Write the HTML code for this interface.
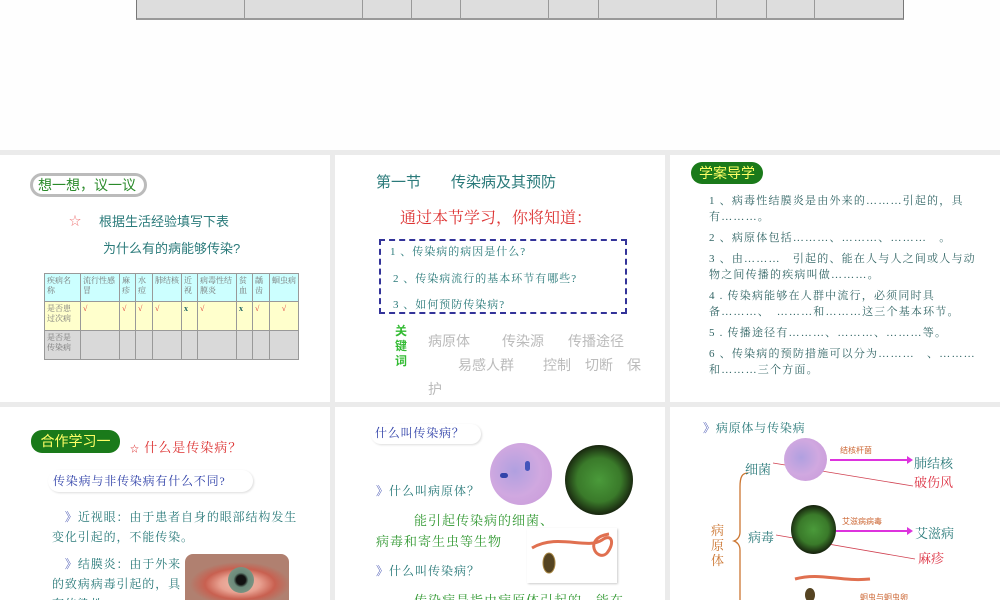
<!DOCTYPE html>
<html><head><meta charset="utf-8"><style>
*{margin:0;padding:0;box-sizing:border-box}
body{width:1000px;height:600px;overflow:hidden;background:#ebebeb;position:relative;font-family:"Liberation Sans","Noto Sans CJK SC",sans-serif}
.s{position:absolute;background:#fff;overflow:hidden}
.a{position:absolute;white-space:nowrap}
.sf{font-family:"Liberation Serif","Noto Serif CJK SC",serif}
table{border-collapse:collapse;table-layout:fixed}
td{border:1px solid #999;font-family:"Liberation Serif","Noto Serif CJK SC",serif;font-size:8px;line-height:10px;color:#777;vertical-align:top;padding:2px 2px;overflow:hidden;word-break:break-all;white-space:normal}
</style></head><body>
<!-- top slide -->
<div class="s" style="left:0;top:0;width:1000px;height:150px;background:#fefefe">
  <div class="a" style="left:136px;top:0;width:768px;height:20px;background:#ddd;border:1px solid #777;border-top:none;border-bottom:2px solid #999"></div>
  <div style="position:absolute;top:0;height:20px;left:244px;border-left:1px solid #999"></div>
  <div style="position:absolute;top:0;height:20px;left:362px;border-left:1px solid #999"></div>
  <div style="position:absolute;top:0;height:20px;left:411px;border-left:1px solid #999"></div>
  <div style="position:absolute;top:0;height:20px;left:460px;border-left:1px solid #999"></div>
  <div style="position:absolute;top:0;height:20px;left:548px;border-left:1px solid #999"></div>
  <div style="position:absolute;top:0;height:20px;left:598px;border-left:1px solid #999"></div>
  <div style="position:absolute;top:0;height:20px;left:716px;border-left:1px solid #999"></div>
  <div style="position:absolute;top:0;height:20px;left:766px;border-left:1px solid #999"></div>
  <div style="position:absolute;top:0;height:20px;left:814px;border-left:1px solid #999"></div>
</div>

<!-- slide 1 -->
<div class="s" style="left:0;top:155px;width:330px;height:247px">
  <div class="a" style="left:30px;top:18px;width:117px;height:24px;border:3px solid #bbb;border-radius:12px;color:#2a8a2a;font-size:14px;line-height:18px;padding-left:5px">想一想，议一议</div>
  <div class="a" style="left:69px;top:57px;color:#e77;font-size:12px">☆</div>
  <div class="a" style="left:99px;top:56px;color:#2a7a7a;font-size:13px">根据生活经验填写下表</div>
  <div class="a" style="left:103px;top:83px;color:#2a7a7a;font-size:13px">为什么有的病能够传染?</div>
  <table class="a" style="left:44px;top:118px;width:254px;height:86px">
    <colgroup><col style="width:36px"><col style="width:39px"><col style="width:16px"><col style="width:17px"><col style="width:29px"><col style="width:16px"><col style="width:39px"><col style="width:16px"><col style="width:17px"><col style="width:29px"></colgroup>
    <tr style="background:#ccffff;height:28px"><td>疾病名称</td><td>流行性感冒</td><td>麻疹</td><td>水痘</td><td>肺结核</td><td>近视</td><td>病毒性结膜炎</td><td>贫血</td><td>龋齿</td><td>蛔虫病</td></tr>
    <tr style="background:#ffffcc;height:29px"><td>是否患过次病</td><td style="color:#d33">√</td><td style="color:#d33">√</td><td style="color:#d33">√</td><td style="color:#d33">√</td><td style="color:#266;font-weight:bold">x</td><td style="color:#d33">√</td><td style="color:#266;font-weight:bold">x</td><td style="color:#d33">√</td><td style="color:#d33;text-align:center">√</td></tr>
    <tr style="background:#d9d9d9;height:29px"><td>是否是传染病</td><td></td><td></td><td></td><td></td><td></td><td></td><td></td><td></td><td></td></tr>
  </table>
</div>

<!-- slide 2 -->
<div class="s" style="left:335px;top:155px;width:330px;height:247px">
  <div class="a" style="left:41px;top:16px;color:#2a7a7a;font-size:15px">第一节　　传染病及其预防</div>
  <div class="a sf" style="left:65px;top:50px;color:#dd3333;font-size:16px">通过本节学习，你将知道：</div>
  <div class="a" style="left:44px;top:84px;width:248px;height:75px;border:2px dashed #333399"></div>
  <div class="a sf" style="left:55px;top:88px;color:#2a7a7a;font-size:11px;letter-spacing:1px">1 、传染病的病因是什么?</div>
  <div class="a sf" style="left:58px;top:115px;color:#2a7a7a;font-size:11px;letter-spacing:1px">2 、传染病流行的基本环节有哪些?</div>
  <div class="a sf" style="left:58px;top:141px;color:#2a7a7a;font-size:11px;letter-spacing:1px">3 、如何预防传染病?</div>
  <div class="a" style="left:60px;top:169px;width:14px;color:#33bb33;font-size:12px;font-weight:bold;line-height:15px;white-space:normal">关键词</div>
  <div class="a" style="left:93px;top:176px;color:#bbb;font-size:14px">病原体</div>
  <div class="a" style="left:167px;top:176px;color:#bbb;font-size:14px">传染源</div>
  <div class="a" style="left:233px;top:176px;color:#bbb;font-size:14px">传播途径</div>
  <div class="a" style="left:123px;top:200px;color:#bbb;font-size:14px">易感人群</div>
  <div class="a" style="left:208px;top:200px;color:#bbb;font-size:14px">控制</div>
  <div class="a" style="left:250px;top:200px;color:#bbb;font-size:14px">切断</div>
  <div class="a" style="left:292px;top:200px;color:#bbb;font-size:14px">保</div>
  <div class="a" style="left:93px;top:224px;color:#bbb;font-size:14px">护</div>
</div>

<!-- slide 3 -->
<div class="s" style="left:670px;top:155px;width:330px;height:247px">
  <div class="a" style="left:21px;top:7px;width:72px;height:22px;background:#1a7a1a;border-radius:11px;color:#ffff66;font-size:14px;line-height:22px;text-align:center">学案导学</div>
  <div class="a sf" style="left:39px;top:38px;width:276px;color:#336666;font-size:11px;letter-spacing:1.2px;line-height:16px;white-space:normal">
    <div>1 、病毒性结膜炎是由外来的………引起的，具有………。</div>
    <div style="margin-top:5px">2 、病原体包括………、………、………　。</div>
    <div style="margin-top:5px">3 、由………　引起的、能在人与人之间或人与动物之间传播的疾病叫做………。</div>
    <div style="margin-top:5px">4 . 传染病能够在人群中流行，必须同时具备………、　………和………这三个基本环节。</div>
    <div style="margin-top:5px">5 . 传播途径有………、………、………等。</div>
    <div style="margin-top:5px">6 、传染病的预防措施可以分为………　、………和………三个方面。</div>
  </div>
</div>

<!-- slide 4 -->
<div class="s" style="left:0;top:407px;width:330px;height:193px">
  <div class="a" style="left:31px;top:23px;width:89px;height:23px;background:#1a7a1a;border-radius:11px;color:#ffff66;font-size:14px;line-height:23px;text-align:center">合作学习一</div>
  <div class="a sf" style="left:130px;top:30px;color:#dd3333;font-size:13px;letter-spacing:1px"><span style="font-size:9px">☆</span> 什么是传染病？</div>
  <div class="a sf" style="left:48px;top:63px;width:205px;height:22px;border-radius:11px;box-shadow:1px 1px 2px #ddd;color:#3344aa;font-size:12px;letter-spacing:0.8px;padding-left:5px;line-height:22px">传染病与非传染病有什么不同?</div>
  <div class="a sf" style="left:52px;top:100px;color:#2a7a7a;font-size:12px;letter-spacing:0.9px;line-height:20px"><span style="color:#3344aa">　》</span>近视眼：由于患者自身的眼部结构发生<br>变化引起的，不能传染。</div>
  <div class="a sf" style="left:52px;top:147px;color:#2a7a7a;font-size:12px;letter-spacing:0.9px;line-height:20px"><span style="color:#3344aa">　》</span>结膜炎：由于外来<br>的致病病毒引起的，具<br>有传染性。</div>
  <div class="a" style="left:185px;top:147px;width:104px;height:60px;border-radius:8px;background:radial-gradient(ellipse 50px 22px at 55px 30px,#f0c0b0 0,#e8a090 40%,#c86050 70%,#b08070 100%)">
    <div style="position:absolute;left:43px;top:13px;width:26px;height:26px;border-radius:50%;background:radial-gradient(circle,#111 0,#111 25%,#6a8a7a 40%,#889a88 100%)"></div>
  </div>
</div>

<!-- slide 5 -->
<div class="s" style="left:335px;top:407px;width:330px;height:193px">
  <div class="a sf" style="left:36px;top:17px;width:110px;height:20px;border-radius:10px;box-shadow:1px 1px 2px #ddd;color:#3344aa;font-size:12px;letter-spacing:0.8px;padding-left:4px">什么叫传染病？</div>
  <div class="a" style="left:155px;top:36px;width:62px;height:62px;border-radius:50%;background:radial-gradient(circle at 40% 45%,#b0a0e0 0,#d0a8e0 50%,#c898d8 100%)">
    <div style="position:absolute;left:10px;top:30px;width:8px;height:5px;background:#3344aa;border-radius:3px"></div>
    <div style="position:absolute;left:35px;top:18px;width:5px;height:10px;background:#4455bb;border-radius:3px"></div>
  </div>
  <div class="a" style="left:230px;top:38px;width:68px;height:70px;border-radius:50%;background:radial-gradient(circle,#4a9a3a 0,#3a7a2a 45%,#1a2a10 70%,#000 100%)"></div>
  <div class="a sf" style="left:41px;top:75px;color:#2a7a7a;font-size:12px;letter-spacing:1px"><span style="color:#3344aa">》</span>什么叫病原体？</div>
  <div class="a sf" style="left:79px;top:103px;color:#339933;font-size:13px;letter-spacing:1px">能引起传染病的细菌、</div>
  <div class="a sf" style="left:41px;top:124px;color:#339933;font-size:13px;letter-spacing:1px">病毒和寄生虫等生物</div>
  <div class="a" style="left:192px;top:121px;width:90px;height:55px;background:#fff;box-shadow:1px 1px 2px #ccc">
    <svg width="90" height="55"><path d="M5 20 C30 5 60 22 75 12 C85 5 88 15 80 25 C70 35 55 10 82 6" fill="none" stroke="#e07050" stroke-width="3"/><ellipse cx="22" cy="35" rx="6" ry="10" fill="#554422" stroke="#aa8844"/></svg>
  </div>
  <div class="a sf" style="left:41px;top:155px;color:#2a7a7a;font-size:12px;letter-spacing:1px"><span style="color:#3344aa">》</span>什么叫传染病？</div>
  <div class="a sf" style="left:79px;top:183px;color:#339933;font-size:13px;letter-spacing:1px">传染病是指由病原体引起的，能在</div>
</div>

<!-- slide 6 -->
<div class="s" style="left:670px;top:407px;width:330px;height:193px">
  <div class="a sf" style="left:33px;top:12px;color:#2a7a7a;font-size:12px;letter-spacing:0.8px"><span style="color:#3344aa">》</span>病原体与传染病</div>
  <svg class="a" style="left:0;top:0" width="330" height="193">
    <path d="M78 66 C72 66 70 70 70 80 L70 125 C70 130 67 133 64 134 C67 135 70 138 70 143 L70 193" fill="none" stroke="#cc7733" stroke-width="1.3"/>
    <line x1="103" y1="56" x2="243" y2="79" stroke="#d04050" stroke-width="0.8"/>
    <line x1="160" y1="53" x2="237" y2="53" stroke="#dd33dd" stroke-width="2"/><path d="M237 49 L243 53 L237 57Z" fill="#dd33dd"/>
    <line x1="106" y1="128" x2="245" y2="152" stroke="#d04050" stroke-width="0.8"/>
    <line x1="166" y1="124" x2="237" y2="124" stroke="#dd33dd" stroke-width="2"/><path d="M237 120 L243 124 L237 128Z" fill="#dd33dd"/>
    <path d="M125 172 C150 165 170 175 200 172" fill="none" stroke="#e07050" stroke-width="3"/>
    <ellipse cx="140" cy="188" rx="5" ry="7" fill="#554422"/>
  </svg>
  <div class="a" style="left:114px;top:31px;width:43px;height:43px;border-radius:50%;background:radial-gradient(circle at 40% 45%,#b0a0e0 0,#d0a8e0 50%,#c898d8 100%)"></div>
  <div class="a" style="left:121px;top:98px;width:45px;height:49px;border-radius:50%;background:radial-gradient(circle,#4a9a3a 0,#3a7a2a 45%,#1a2a10 70%,#000 100%)"></div>
  <div class="a sf" style="left:75px;top:52px;color:#2a7a7a;font-size:13px">细菌</div>
  <div class="a sf" style="left:78px;top:120px;color:#2a7a7a;font-size:13px">病毒</div>
  <div class="a sf" style="left:41px;top:116px;width:14px;color:#cc7733;font-size:13px;line-height:15px;white-space:normal">病原体</div>
  <div class="a" style="left:170px;top:38px;color:#cc6633;font-size:8px">结核杆菌</div>
  <div class="a" style="left:172px;top:109px;color:#cc6633;font-size:8px">艾滋病病毒</div>
  <div class="a" style="left:190px;top:185px;color:#cc6633;font-size:8px">蛔虫与蛔虫卵</div>
  <div class="a sf" style="left:244px;top:46px;color:#2a7a7a;font-size:13px">肺结核</div>
  <div class="a sf" style="left:244px;top:65px;color:#dd3344;font-size:13px">破伤风</div>
  <div class="a sf" style="left:245px;top:116px;color:#2a7a7a;font-size:13px">艾滋病</div>
  <div class="a sf" style="left:248px;top:141px;color:#dd3344;font-size:13px">麻疹</div>
</div>
</body></html>
